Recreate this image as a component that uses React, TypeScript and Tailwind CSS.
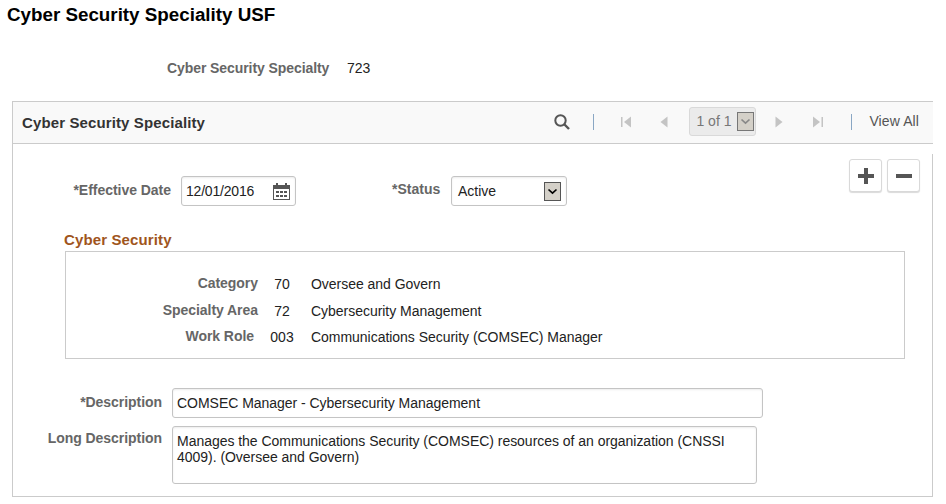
import React from 'react';

function Chevron({ className }: { className: string }) {
  return (
    <span className={`flex h-[19px] w-[17px] items-center justify-center border border-[#555] bg-[#d4d0c8] ${className}`}>
      <svg width="11" height="7" viewBox="0 0 11 7" fill="none">
        <path d="M1.5 1.5 5.5 5.2 9.5 1.5" stroke="currentColor" strokeWidth="1.7" />
      </svg>
    </span>
  );
}

function Row({ label, code, text, height, pr }: { label: string; code: string; text: string; height: string; pr: string }) {
  return (
    <div className={`flex items-center ${height}`}>
      <span className={`w-[192px] pb-[2px] text-right text-[14px] tracking-[-0.05px] font-bold text-[#666] ${pr}`}>{label}</span>
      <span className="w-[48px] text-center">{code}</span>
      <span className="ml-[5px] tracking-[-0.03px]">{text}</span>
    </div>
  );
}

function App() {
  return (
    <div className="h-[504px] w-[946px] overflow-hidden bg-white font-['Liberation_Sans',Arial,sans-serif] text-[14px] text-[#222]">
      <h1 className="pl-[7px] pt-[5px] text-[18.8px] leading-[20px] font-bold text-black">Cyber Security Speciality USF</h1>

      <div className="mt-[33px] flex h-[20px] items-center pl-[167px]">
        <span className="w-[180px] text-[14px] tracking-[-0.08px] font-bold text-[#666]">Cyber Security Specialty</span>
        <span>723</span>
      </div>

      {/* Panel */}
      <div className="relative mt-[23px] ml-[12px] h-[396px] w-[921px] border-y border-l border-[#cbcbcb]">
        <div className="flex h-[42px] items-center justify-between border-b border-[#cbcbcb] bg-[#f9f9f9] pl-[9px] pr-[14px]">
          <span className="pt-[2px] text-[15px] tracking-[0.12px] font-bold text-[#333]">Cyber Security Speciality</span>
          <div className="flex items-center pb-[2px] text-[#666]">
            <svg width="18" height="18" viewBox="0 0 18 18" fill="none" className="mr-[22px]">
              <circle cx="7.5" cy="7.5" r="5.2" stroke="#555" strokeWidth="2" />
              <path d="M11.5 11.5 16 16" stroke="#555" strokeWidth="2.4" />
            </svg>
            <span className="mr-[26px] h-[16px] w-px bg-[#8aa7c4]" />
            <svg width="14" height="12" viewBox="0 0 14 12" className="mr-[25px]" fill="#c4c4c4">
              <rect x="1" y="1" width="1.5" height="10" />
              <path d="M11 0.5V11.5L4 6Z" />
            </svg>
            <svg width="10" height="12" viewBox="0 0 10 12" className="mr-[20px]" fill="#c4c4c4">
              <path d="M8.5 0.5V11.5L1.5 6Z" />
            </svg>
            <div className="mr-[18px] flex h-[29px] w-[67px] items-center justify-between rounded-[3px] border border-[#d9d9d9] bg-[#ebebeb] pl-[6px] pr-[1px] text-[#777]">
              <span>1 of 1</span>
              <Chevron className="border-[#777] text-[#888]" />
            </div>
            <svg width="10" height="12" viewBox="0 0 10 12" className="mr-[27px]" fill="#c4c4c4">
              <path d="M1.5 0.5V11.5L8.5 6Z" />
            </svg>
            <svg width="14" height="12" viewBox="0 0 14 12" className="mr-[26px]" fill="#c4c4c4">
              <path d="M2 0.5V11.5L9 6Z" />
              <rect x="10.5" y="1" width="1.5" height="10" />
            </svg>
            <span className="mr-[17px] h-[16px] w-px bg-[#8aa7c4]" />
            <span className="tracking-[0.1px] text-[#555]">View All</span>
          </div>
        </div>

        {/* right edge only starts a little below the header */}
        <span className="absolute bottom-0 right-0 top-[52px] w-px bg-[#cbcbcb]" />

        <div className="relative px-[51px] pt-[32px]">
          <div className="absolute right-[13px] top-[15px] flex gap-[5px]">
            <button className="flex h-[33px] w-[33px] items-center justify-center rounded-[3px] border border-[#d9d9d9] bg-white shadow-[0_1px_1px_rgba(0,0,0,0.15)]">
              <svg width="16" height="16" viewBox="0 0 16 16" fill="#555"><path d="M6 0h4v6h6v4h-6v6H6v-6H0V6h6z" /></svg>
            </button>
            <button className="flex h-[33px] w-[33px] items-center justify-center rounded-[3px] border border-[#d9d9d9] bg-white shadow-[0_1px_1px_rgba(0,0,0,0.15)]">
              <svg width="16" height="4" viewBox="0 0 16 4" fill="#555"><rect width="16" height="4" /></svg>
            </button>
          </div>

          <div className="flex items-center">
            <span className="w-[107px] pb-[2px] text-right text-[14px] tracking-[-0.03px] font-bold text-[#666]">*Effective Date</span>
            <div className="ml-[10px] flex h-[30px] w-[115px] items-center justify-between rounded-[3px] border border-[#c4c4c4] pl-[4px] pr-[4px] shadow-[inset_0_1px_2px_rgba(0,0,0,0.08)]">
              <span className="tracking-[-0.2px]">12/01/2016</span>
              <svg width="19" height="19" viewBox="0 0 19 19" fill="#555">
                <path d="M1 3h3V1h2v2h7V1h2v2h3v15H1zM2 7v10h15V7z" />
                <path d="M4 9h3v2H4zM8 9h3v2H8zM12 9h3v2h-3zM4 13h3v2H4zM8 13h3v2H8zM12 13h3v2h-3z" />
              </svg>
            </div>
            <span className="ml-[96px] w-[48px] pb-[3px] text-right text-[14px] font-bold text-[#666]">*Status</span>
            <div className="ml-[11px] flex h-[30px] w-[116px] items-center justify-between rounded-[3px] border border-[#c4c4c4] pl-[6px] pr-[5px] shadow-[inset_0_1px_2px_rgba(0,0,0,0.08)]">
              <span>Active</span>
              <Chevron className="text-black" />
            </div>
          </div>

          <h2 className="mt-[24px] text-[15px] tracking-[0.13px] leading-[20px] font-bold text-[#a0551c]">Cyber Security</h2>
          <div className="mt-[1px] ml-[1px] h-[108px] w-[840px] border border-[#cbcbcb] pt-[19px]">
            <Row label="Category" code="70" text="Oversee and Govern" height="h-[27px]" pr="" />
            <Row label="Specialty Area" code="72" text="Cybersecurity Management" height="h-[26px]" pr="" />
            <Row label="Work Role" code="003" text="Communications Security (COMSEC) Manager" height="h-[26px]" pr="pr-[4px]" />
          </div>

          <div className="mt-[29px] -ml-[50px] flex items-center">
            <span className="w-[148px] pb-[2px] text-right text-[14px] tracking-[-0.05px] font-bold text-[#666]">*Description</span>
            <div className="ml-[10px] flex h-[30px] w-[591px] items-center rounded-[3px] border border-[#c4c4c4] px-[4px] tracking-[-0.03px] shadow-[inset_0_1px_2px_rgba(0,0,0,0.08)]">
              COMSEC Manager - Cybersecurity Management
            </div>
          </div>
          <div className="mt-[8px] -ml-[50px] flex items-start">
            <span className="w-[148px] pt-[2px] text-right text-[14px] tracking-[-0.05px] font-bold text-[#666]">Long Description</span>
            <div className="ml-[10px] h-[58px] w-[585px] rounded-[3px] border border-[#c4c4c4] px-[4px] pt-[6px] leading-[16px] tracking-[-0.03px] shadow-[inset_0_1px_2px_rgba(0,0,0,0.08)]">
              Manages the Communications Security (COMSEC) resources of an organization (CNSSI 4009). (Oversee and Govern)
            </div>
          </div>
        </div>
      </div>
    </div>
  );
}

export default App;
